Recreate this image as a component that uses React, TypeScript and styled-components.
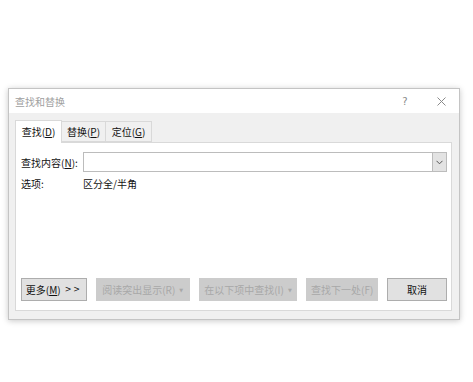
import React from "react";
import styled, { createGlobalStyle } from "styled-components";

const Global = createGlobalStyle`
  html, body { margin: 0; padding: 0; background: #ffffff; }
  body { font-family: "Noto Sans CJK SC", "Noto Sans", sans-serif; }
`;

const Page = styled.div`
  width: 473px;
  height: 382px;
  padding: 88px 0 0 8px;
  box-sizing: border-box;
`;

const Dialog = styled.div`
  width: 452px;
  height: 232px;
  box-sizing: border-box;
  border: 1px solid #c4c4c4;
  box-shadow: 0 1px 6px rgba(0, 0, 0, 0.22);
  background: #f0f0f0;
  display: flex;
  flex-direction: column;
`;

const TitleBar = styled.div`
  height: 24px;
  background: #ffffff;
  display: flex;
  align-items: center;
  padding: 0 0 0 6px;
  font-size: 10px;
  color: #a0a0a0;
`;

const Title = styled.span`
  flex: 1;
`;

const TitleButton = styled.span`
  width: 36px;
  display: flex;
  justify-content: center;
  align-items: center;
  color: #8a8a8a;
  font-family: "DejaVu Sans", sans-serif;
  font-size: 10px;
`;

const Body = styled.div`
  flex: 1;
  display: flex;
  flex-direction: column;
  padding: 7px 7px 8px 6px;
`;

const Tabs = styled.div`
  display: flex;
  align-items: flex-end;
  height: 22px;
  position: relative;
  z-index: 1;
`;

const Tab = styled.div<{ $active?: boolean; $first?: boolean; $w: number }>`
  box-sizing: border-box;
  height: ${(p) => (p.$active ? "23px" : "21px")};
  margin-bottom: ${(p) => (p.$active ? "-1px" : "0")};
  width: ${(p) => p.$w}px;
  border: 1px solid #d9d9d9;
  border-bottom: ${(p) => (p.$active ? "none" : "1px solid #d9d9d9")};
  border-left: ${(p) => (p.$first ? "1px solid #d9d9d9" : "none")};
  background: ${(p) => (p.$active ? "#ffffff" : "#f0f0f0")};
  font-size: 10px;
  color: #111;
  display: flex;
  align-items: center;
  justify-content: center;
  padding-bottom: ${(p) => (p.$active ? "2px" : "0")};
`;

const U = styled.span`
  text-decoration: underline;
  text-underline-offset: 1px;
`;

const Panel = styled.div`
  flex: 1;
  background: #ffffff;
  border: 1px solid #d9d9d9;
  display: flex;
  flex-direction: column;
  padding: 9px 4px 9px 5px;
`;

const Row = styled.div<{ $h: number }>`
  display: flex;
  align-items: center;
  height: ${(p) => p.$h}px;
  font-size: 10px;
  color: #111;
`;

const Label = styled.span`
  width: 62px;
  flex-shrink: 0;
`;

const Combo = styled.div`
  flex: 1;
  height: 20px;
  box-sizing: border-box;
  border: 1px solid #bcbcbc;
  display: flex;
  justify-content: flex-end;
`;

const ComboButton = styled.div`
  width: 13px;
  height: 18px;
  background: #e3e3e3;
  border-left: 1px solid #bcbcbc;
  display: flex;
  align-items: center;
  justify-content: center;
`;

const Buttons = styled.div`
  margin-top: auto;
  display: flex;
  gap: 9px;
`;

const Button = styled.div<{ $w: number; $disabled?: boolean }>`
  width: ${(p) => p.$w}px;
  height: 23px;
  box-sizing: border-box;
  border: 1px solid ${(p) => (p.$disabled ? "#cccccc" : "#adadad")};
  background: ${(p) => (p.$disabled ? "#cccccc" : "#e1e1e1")};
  color: ${(p) => (p.$disabled ? "#a8a8a8" : "#111")};
  font-size: 10px;
  display: flex;
  align-items: center;
  justify-content: center;
  gap: 4px;
  white-space: nowrap;
`;

const Caret = styled.span`
  font-size: 5px;
  font-family: "DejaVu Sans", sans-serif;
`;

const Arrows = styled.span`
  font-size: 8px;
  letter-spacing: 2px;
  font-family: "DejaVu Sans", sans-serif;
`;

const Chevron = () => (
  <svg width="7" height="5" viewBox="0 0 7 5">
    <path d="M0.5 0.8 L3.5 3.8 L6.5 0.8" fill="none" stroke="#555" strokeWidth="1" />
  </svg>
);

const CloseIcon = () => (
  <svg width="9" height="9" viewBox="0 0 9 9">
    <path d="M0.5 0.5 L8.5 8.5 M8.5 0.5 L0.5 8.5" stroke="#8a8a8a" strokeWidth="1" />
  </svg>
);

export default function App() {
  return (
    <>
      <Global />
      <Page>
        <Dialog>
          <TitleBar>
            <Title>查找和替换</Title>
            <TitleButton>?</TitleButton>
            <TitleButton>
              <CloseIcon />
            </TitleButton>
          </TitleBar>
          <Body>
            <Tabs>
              <Tab $active $first $w={47}>
                查找(<U>D</U>)
              </Tab>
              <Tab $w={44}>
                替换(<U>P</U>)
              </Tab>
              <Tab $w={46}>
                定位(<U>G</U>)
              </Tab>
            </Tabs>
            <Panel>
              <Row $h={20}>
                <Label>
                  查找内容(<U>N</U>):
                </Label>
                <Combo>
                  <ComboButton>
                    <Chevron />
                  </ComboButton>
                </Combo>
              </Row>
              <Row $h={22}>
                <Label>选项:</Label>
                <span>区分全/半角</span>
              </Row>
              <Buttons>
                <Button $w={66}>
                  <span>
                    更多(<U>M</U>)
                  </span>
                  <Arrows>&gt;&gt;</Arrows>
                </Button>
                <Button $w={94} $disabled>
                  <span>阅读突出显示(R)</span>
                  <Caret>▼</Caret>
                </Button>
                <Button $w={99} $disabled>
                  <span>在以下项中查找(I)</span>
                  <Caret>▼</Caret>
                </Button>
                <Button $w={72} $disabled>
                  <span>查找下一处(F)</span>
                </Button>
                <Button $w={60}>
                  <span>取消</span>
                </Button>
              </Buttons>
            </Panel>
          </Body>
        </Dialog>
      </Page>
    </>
  );
}
